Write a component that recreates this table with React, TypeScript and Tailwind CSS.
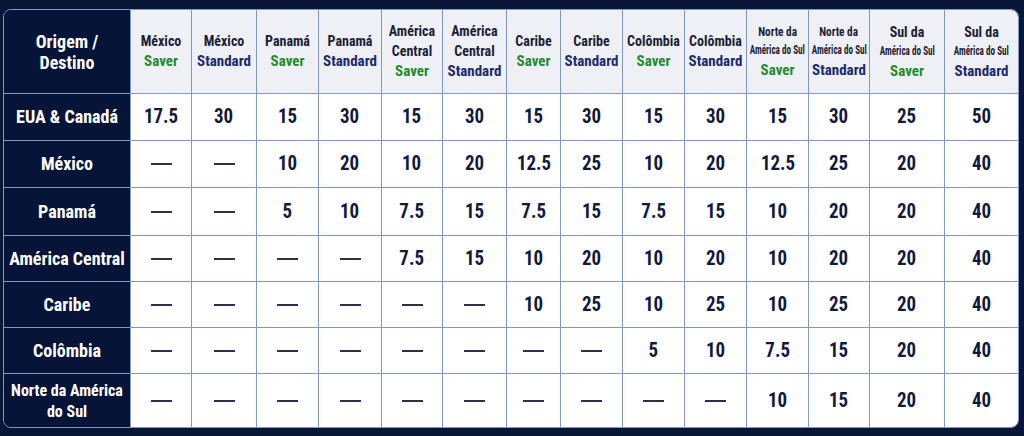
import React from "react";

type Head = { lines: string[]; small?: number[]; kind: "Saver" | "Standard" };

const heads: Head[] = [
  { lines: ["México"], kind: "Saver" },
  { lines: ["México"], kind: "Standard" },
  { lines: ["Panamá"], kind: "Saver" },
  { lines: ["Panamá"], kind: "Standard" },
  { lines: ["América", "Central"], kind: "Saver" },
  { lines: ["América", "Central"], kind: "Standard" },
  { lines: ["Caribe"], kind: "Saver" },
  { lines: ["Caribe"], kind: "Standard" },
  { lines: ["Colômbia"], kind: "Saver" },
  { lines: ["Colômbia"], kind: "Standard" },
  { lines: ["Norte da", "América do Sul"], small: [0, 1], kind: "Saver" },
  { lines: ["Norte da", "América do Sul"], small: [0, 1], kind: "Standard" },
  { lines: ["Sul da", "América do Sul"], small: [1], kind: "Saver" },
  { lines: ["Sul da", "América do Sul"], small: [1], kind: "Standard" },
];

const D = "—";

const rows: { label: string[]; values: string[] }[] = [
  { label: ["EUA & Canadá"], values: ["17.5", "30", "15", "30", "15", "30", "15", "30", "15", "30", "15", "30", "25", "50"] },
  { label: ["México"], values: [D, D, "10", "20", "10", "20", "12.5", "25", "10", "20", "12.5", "25", "20", "40"] },
  { label: ["Panamá"], values: [D, D, "5", "10", "7.5", "15", "7.5", "15", "7.5", "15", "10", "20", "20", "40"] },
  { label: ["América Central"], values: [D, D, D, D, "7.5", "15", "10", "20", "10", "20", "10", "20", "20", "40"] },
  { label: ["Caribe"], values: [D, D, D, D, D, D, "10", "25", "10", "25", "10", "25", "20", "40"] },
  { label: ["Colômbia"], values: [D, D, D, D, D, D, D, D, "5", "10", "7.5", "15", "20", "40"] },
  { label: ["Norte da América", "do Sul"], values: [D, D, D, D, D, D, D, D, D, D, "10", "15", "20", "40"] },
];

const font = { fontFamily: '"Roboto Condensed", "Liberation Sans Narrow", Roboto, sans-serif' };

// small line sizes: "Norte da" sits a touch larger than "América do Sul"
const smallClass = (l: string) =>
  l === "Norte da"
    ? "text-[12.5px] leading-[19px] scale-x-[0.9]"
    : "text-[12px] leading-[19px] scale-x-[0.76]";

export default function App() {
  return (
    <div className="w-full h-[436px] bg-[#0a1636] pt-[9px] pl-[3px]" style={font}>
      <div className="w-[1016px] h-[419px] rounded-[8px] overflow-hidden border border-[#8196cb] grid grid-cols-[127px_61px_65px_62px_63px_61px_64px_54px_62px_62px_62px_62px_61px_75px_73px] grid-rows-[84px_47px_47px_48px_46px_46px_46px_53px]">
        <div className="bg-[#061437] border-r border-b border-[#8196cb] flex flex-col items-center justify-center text-white font-bold text-[18px] leading-[21px]">
          <span>Origem /</span>
          <span>Destino</span>
        </div>
        {heads.map((h, i) => (
          <div
            key={i}
            className={`bg-[#eef0f6] border-b border-[#8196cb] flex flex-col items-center justify-center font-bold ${i < heads.length - 1 ? "border-r" : ""}`}
          >
            {h.lines.map((l, j) => (
              <span
                key={j}
                className={`whitespace-nowrap text-[#1b1f36] ${h.small && h.small.includes(j) ? smallClass(l) : "text-[14px] leading-[20px]"}`}
              >
                {l}
              </span>
            ))}
            <span
              className={`whitespace-nowrap text-[15px] leading-[21px] ${h.kind === "Saver" ? "text-[#1f8b2b]" : "text-[#1c2a6b]"}`}
            >
              {h.kind}
            </span>
          </div>
        ))}
        {rows.map((r, ri) => (
          <React.Fragment key={ri}>
            <div
              className={`bg-[#061437] border-r border-[#8196cb] flex flex-col items-center justify-center text-white font-bold ${ri < rows.length - 1 ? "border-b" : ""} ${r.label.length > 1 ? "text-[16px] leading-[21px]" : "text-[18px] leading-[22px]"}`}
            >
              {r.label.map((l, j) => (
                <span key={j} className="whitespace-nowrap">
                  {l}
                </span>
              ))}
            </div>
            {r.values.map((v, vi) => (
              <div
                key={vi}
                className={`bg-white border-[#8196cb] flex items-center justify-center text-[#111a3c] ${vi < r.values.length - 1 ? "border-r" : ""} ${ri < rows.length - 1 ? "border-b" : ""}`}
              >
                {v === D ? (
                  <span className="block w-[21px] h-[2px] bg-[#2a3050]" />
                ) : (
                  <span className="text-[21px] font-bold scale-x-[0.9]">{v}</span>
                )}
              </div>
            ))}
          </React.Fragment>
        ))}
      </div>
    </div>
  );
}
